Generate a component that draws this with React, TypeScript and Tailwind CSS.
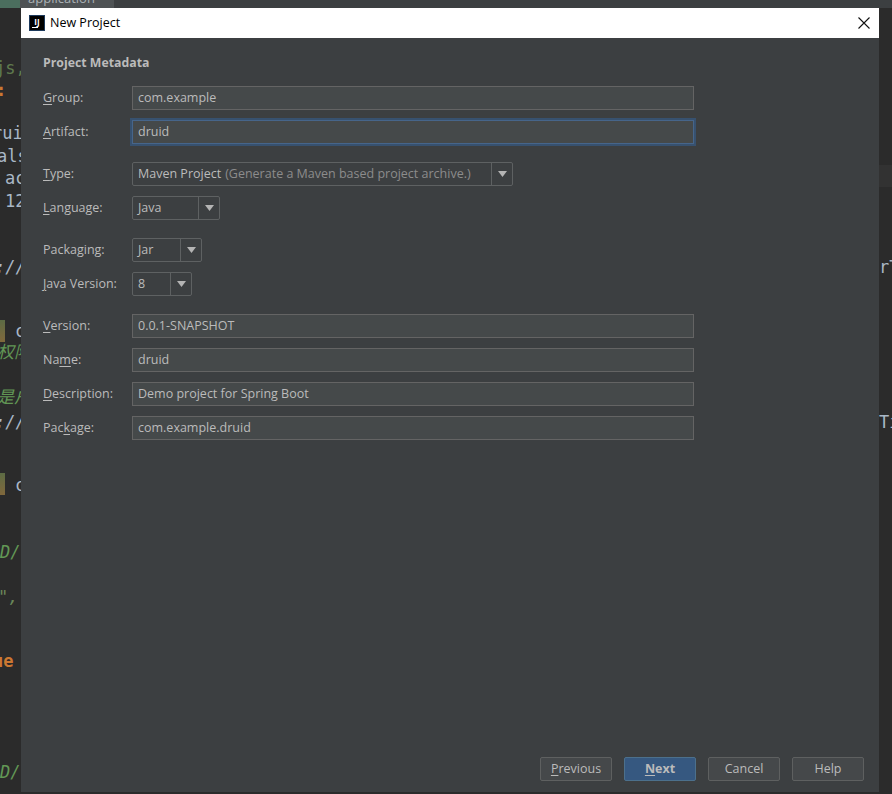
const uiFont = "[font-family:'Open_Sans','Noto_Sans',sans-serif]"

const fragments = [
  { top: 58, left: -5, text: 'js,', cls: 'text-[#5f7a4e]' },
  { top: 80, left: -4, text: ':', cls: 'text-[#cc7832] font-bold' },
  { top: 123, left: -8, text: 'rui', cls: 'text-[#a9b7c6]' },
  { top: 146, left: -3, text: 'als', cls: 'text-[#a9b7c6]' },
  { top: 168, left: 5, text: 'ac', cls: 'text-[#a9b7c6]' },
  { top: 191, left: 5, text: '12', cls: 'text-[#a9b7c6]' },
  { top: 257, left: -5, text: '://', cls: 'text-[#a9b7c6] italic' },
  { top: 412, left: -5, text: '://', cls: 'text-[#a9b7c6] italic' },
  { top: 321, left: 15, text: 'c', cls: 'text-[#a9b7c6]' },
  { top: 475, left: 15, text: 'c', cls: 'text-[#a9b7c6]' },
  { top: 342, left: -3, text: '权限', cls: 'text-[#629755] italic' },
  { top: 387, left: -3, text: '是户', cls: 'text-[#629755] italic' },
  { top: 542, left: 0, text: 'D/', cls: 'text-[#629755] italic' },
  { top: 762, left: 0, text: 'D/', cls: 'text-[#629755] italic' },
  { top: 587, left: -2, text: '",', cls: 'text-[#6a8759] italic' },
  { top: 651, left: -7, text: 'ue', cls: 'text-[#cc7832] font-bold' },
  { top: 257, left: 879, text: 'rT', cls: 'text-[#a9b7c6]' },
  { top: 412, left: 879, text: 'Ti', cls: 'text-[#a9b7c6]' },
]

function Label({ pre, u, post }: { pre?: string; u: string; post: string }) {
  return (
    <span className="w-[89px] text-[12.5px] text-[#bbbbbb] whitespace-nowrap">
      {pre}
      <span className="underline underline-offset-2">{u}</span>
      {post}
    </span>
  )
}

function Field({ value, focused }: { value: string; focused?: boolean }) {
  return (
    <div
      className={`w-[562px] h-6 flex items-center pl-[5px] text-[12.5px] text-[#bbbbbb] bg-[#45494a] border ${
        focused ? 'border-[#46658a] outline-2 outline-[#37516f]' : 'border-[#646464]'
      }`}
    >
      {value}
    </div>
  )
}

function Combo({ width, children }: { width: string; children: React.ReactNode }) {
  return (
    <div className={`${width} h-6 flex border border-[#5e6162] rounded-[2px] text-[12.5px] text-[#bbbbbb] bg-[#3c3f41]`}>
      <div className="flex-1 flex items-center pl-[5px] whitespace-nowrap overflow-hidden">{children}</div>
      <div className="w-[21px] flex items-center justify-center border-l border-[#5e6162]">
        <svg width="9" height="6" viewBox="0 0 9 6">
          <path d="M0 0h9L4.5 6z" fill="#b4b4b4" />
        </svg>
      </div>
    </div>
  )
}

function Row({ label, children }: { label: React.ReactNode; children: React.ReactNode }) {
  return (
    <div className="flex items-center h-6">
      {label}
      {children}
    </div>
  )
}

function Btn({ children, primary }: { children: React.ReactNode; primary?: boolean }) {
  return (
    <button
      className={`w-[72px] h-6 pt-px text-[12.5px] border rounded-[2px] ${
        primary
          ? 'bg-[#365880] border-[#4c708c] text-[#bbbbbb] font-bold'
          : 'bg-[#45484a] border-[#5e6060] text-[#bbbbbb]'
      }`}
    >
      {children}
    </button>
  )
}

export default function App() {
  return (
    <div className={`relative w-[892px] h-[794px] overflow-hidden bg-[#2b2b2b] ${uiFont}`}>
      {/* editor peeking out behind the dialog */}
      <div className="absolute inset-x-0 top-0 h-2 bg-[#3c3f41]">
        <div className="absolute left-0 top-0 w-5 h-2 bg-[#4b6e5e]" />
        <div className="absolute left-[20px] top-0 w-[94px] h-2 bg-[#4e5254]">
          <span className="absolute left-2 -top-[11px] text-[13px] text-[#a9b0b5]">application</span>
        </div>
      </div>
      <div className="absolute left-[879px] right-0 top-[165px] h-[22px] bg-[#323232]" />
      {fragments.map((f) => (
        <span
          key={`${f.top}-${f.left}`}
          className={`absolute text-[17px] leading-[20px] whitespace-pre font-['DejaVu_Sans_Mono','Noto_Sans_CJK_SC',monospace] ${f.cls}`}
          style={{ top: f.top, left: f.left }}
        >
          {f.text}
        </span>
      ))}
      <div className="absolute left-0 top-[320px] w-[5px] h-[22px] bg-linear-to-b from-[#5c6b44] to-[#80683c]" />
      <div className="absolute left-0 top-[473px] w-[5px] h-[22px] bg-linear-to-b from-[#5c6b44] to-[#80683c]" />

      {/* dialog */}
      <div className="relative ml-[21px] translate-y-2 w-[858px] h-[784px] flex flex-col bg-[#3c3f41]">
        <div className="h-[30px] shrink-0 bg-white flex items-center pl-2 pr-[9px]">
          <div className="w-4 h-4 bg-black border border-[#1d3a5c] flex flex-col items-center justify-start pt-[1px]">
            <span className="text-white text-[8px] leading-[9px] font-bold">IJ</span>
            <span className="block w-[6px] h-[1px] bg-white mt-[1px] self-start ml-[2px]" />
          </div>
          <span className="ml-[5px] text-[12.5px] text-black">New Project</span>
          <svg className="ml-auto" width="12" height="12" viewBox="0 0 12 12">
            <path d="M.5.5l11 11M11.5.5l-11 11" stroke="#111" strokeWidth="1.1" />
          </svg>
        </div>

        <div className="flex-1 flex flex-col pl-[22px] pr-[15px] pt-[16px] pb-[11px]">
          <div className="h-[17px] leading-[17px] text-[12.3px] font-bold text-[#bbbbbb]">Project Metadata</div>

          <div className="mt-[15px] flex flex-col gap-[10px]">
            <Row label={<Label u="G" post="roup:" />}><Field value="com.example" /></Row>
            <Row label={<Label u="A" post="rtifact:" />}><Field value="druid" focused /></Row>
          </div>
          <div className="mt-[18px] flex flex-col gap-[10px]">
            <Row label={<Label u="T" post="ype:" />}>
              <Combo width="w-[381px]">
                Maven Project<span className="text-[#8c8c8c] ml-1">(Generate a Maven based project archive.)</span>
              </Combo>
            </Row>
            <Row label={<Label u="L" post="anguage:" />}><Combo width="w-[88px]">Java</Combo></Row>
          </div>
          <div className="mt-[18px] flex flex-col gap-[10px]">
            <Row label={<Label pre="Packa" u="g" post="ing:" />}><Combo width="w-[70px]">Jar</Combo></Row>
            <Row label={<Label u="J" post="ava Version:" />}><Combo width="w-[60px]">8</Combo></Row>
          </div>
          <div className="mt-[18px] flex flex-col gap-[10px]">
            <Row label={<Label u="V" post="ersion:" />}><Field value="0.0.1-SNAPSHOT" /></Row>
            <Row label={<Label pre="Na" u="m" post="e:" />}><Field value="druid" /></Row>
            <Row label={<Label u="D" post="escription:" />}><Field value="Demo project for Spring Boot" /></Row>
            <Row label={<Label pre="Pac" u="k" post="age:" />}><Field value="com.example.druid" /></Row>
          </div>

          <div className="mt-auto flex justify-end gap-3">
            <Btn><span className="underline underline-offset-2">P</span>revious</Btn>
            <Btn primary><span className="underline underline-offset-2">N</span>ext</Btn>
            <Btn>Cancel</Btn>
            <Btn>Help</Btn>
          </div>
        </div>
      </div>
    </div>
  )
}
